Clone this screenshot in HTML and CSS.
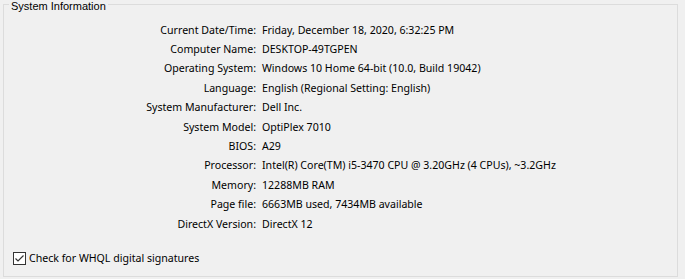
FILE: index.html
```html
<!DOCTYPE html>
<html lang="en">
<head>
  <meta charset="UTF-8">
  <title>System Information</title>
  <link rel="stylesheet" href="styles.css">
</head>
<body>
  <fieldset class="group">
    <legend>System Information</legend>
    <div class="info-grid">
      <div class="label">Current Date/Time:</div><div class="value">Friday, December 18, 2020, 6:32:25 PM</div>
      <div class="label">Computer Name:</div><div class="value">DESKTOP-49TGPEN</div>
      <div class="label">Operating System:</div><div class="value">Windows 10 Home 64-bit (10.0, Build 19042)</div>
      <div class="label">Language:</div><div class="value">English (Regional Setting: English)</div>
      <div class="label">System Manufacturer:</div><div class="value">Dell Inc.</div>
      <div class="label">System Model:</div><div class="value">OptiPlex 7010</div>
      <div class="label">BIOS:</div><div class="value">A29</div>
      <div class="label">Processor:</div><div class="value">Intel(R) Core(TM) i5-3470 CPU @ 3.20GHz (4 CPUs), ~3.2GHz</div>
      <div class="label">Memory:</div><div class="value">12288MB RAM</div>
      <div class="label">Page file:</div><div class="value">6663MB used, 7434MB available</div>
      <div class="label">DirectX Version:</div><div class="value">DirectX 12</div>
    </div>
    <label class="check">
      <span class="box">
        <svg width="11" height="11" viewBox="0 0 11 11"><path d="M1.5 5.5 L4 8 L9.5 2.5" fill="none" stroke="#333" stroke-width="1.2"/></svg>
      </span>
      Check for WHQL digital signatures
    </label>
  </fieldset>
</body>
</html>
```

FILE: styles.css
```css
body {
  margin: 0;
  background-color: #f0f0f0;
  font-family: "Noto Sans", "Liberation Sans", sans-serif;
  font-size: 10.6px;
  color: #000;
}
.group {
  position: relative;
  margin: 4px 7px 0 3px;
  padding: 0;
  height: 273px;
  box-sizing: border-box;
  border: 1px solid #dcdcdc;
}
/* legende posee sur la bordure du cadre */
.group legend {
  position: absolute;
  top: -5px;
  left: 5px;
  padding: 0 2px;
  background-color: #f0f0f0;
  font-family: "Liberation Sans", sans-serif;
  font-size: 11px;
  line-height: 13px;
}
.info-grid {
  display: grid;
  grid-template-columns: 252px 1fr;
  column-gap: 6px;
  grid-auto-rows: 19.4px;
  align-items: center;
  padding-top: 15px;
}
.label {
  text-align: right;
}
.check {
  display: flex;
  align-items: center;
  gap: 3px;
  margin: 18px 0 0 9px;
}
.box {
  width: 11px;
  height: 11px;
  border: 1px solid #333;
  background-color: #fff;
  display: flex;
}
```
